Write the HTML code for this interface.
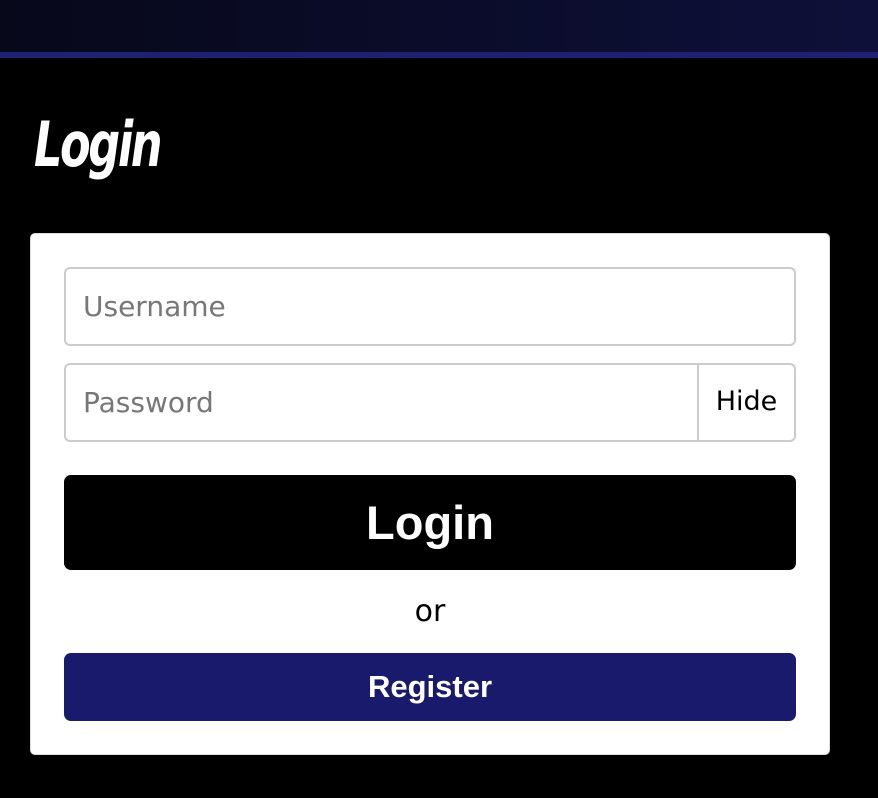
<!DOCTYPE html>
<html><head><style>
*{box-sizing:border-box;margin:0;padding:0}
body{width:878px;height:798px;background:#000;position:relative;overflow:hidden;font-family:"Liberation Sans",sans-serif}
.top{position:absolute;left:0;top:0;width:878px;height:52px;background:linear-gradient(90deg,#07081a,#0e103a)}
.stripe{position:absolute;left:0;top:52px;width:878px;height:6px;background:#1e2172}
h1{position:absolute;left:34px;top:108px;color:#fff;font-family:"DejaVu Sans Condensed","DejaVu Sans",sans-serif;font-style:italic;font-weight:bold;font-size:62px;letter-spacing:-3px;transform:scaleX(.8);transform-origin:left}
.card{position:absolute;left:30px;top:233px;width:800px;height:522px;background:#fff;border:1px solid #ddd;border-radius:5px}
.in{position:absolute;left:33px;width:732px;height:79px;border:2px solid #ccc;border-radius:6px;font-size:28px;color:#777;padding-left:17px;line-height:75px;font-family:"DejaVu Sans",sans-serif;font-weight:normal}
.hide{position:absolute;right:0;top:0;width:97px;height:75px;border-left:2px solid #ccc;color:#000;font-size:27px;text-align:center;line-height:73px;padding:0;font-family:"DejaVu Sans",sans-serif}
.btn{position:absolute;left:33px;width:732px;border-radius:7px;color:#fff;font-weight:bold;text-align:center}
.or{position:absolute;left:0;width:100%;top:360px;text-align:center;font-size:30px;font-family:"DejaVu Sans",sans-serif}
</style></head><body>
<div class="top"></div><div class="stripe"></div>
<h1>Login</h1>
<div class="card">
<div class="in" style="top:33px">Username</div>
<div class="in" style="top:129px">Password<div class="hide">Hide</div></div>
<div class="btn" style="top:241px;height:95px;background:#000;font-size:47px;line-height:95px">Login</div>
<div class="or">or</div>
<div class="btn" style="top:419px;height:68px;background:#191a6b;font-size:31px;line-height:68px">Register</div>
</div>
</body></html>
